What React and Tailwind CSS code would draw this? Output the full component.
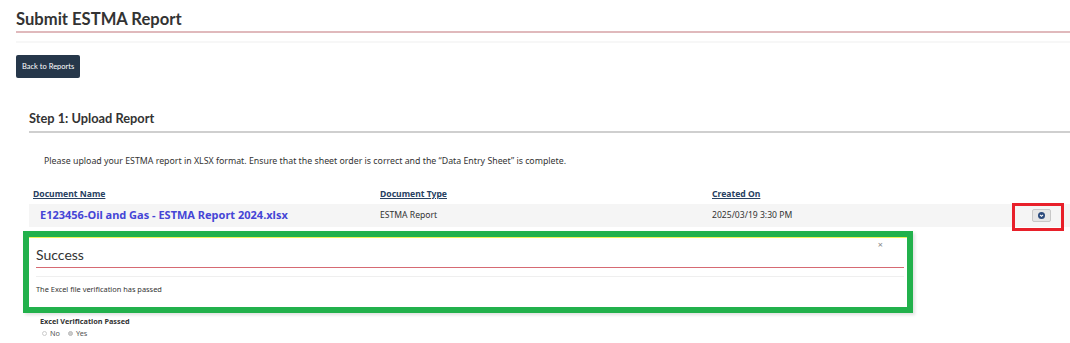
export default function App() {
  return (
    <div className="min-h-screen bg-white pl-[16px] text-[#333]" style={{ fontFamily: '"Noto Sans", sans-serif' }}>
      <h1 className="pt-[7px] text-[16.6px] font-bold leading-[24px] border-b-2 border-[#e0b9bc]" style={{ fontFamily: 'Lato, sans-serif' }}>
        Submit ESTMA Report
      </h1>
      <div className="mt-[8px] h-[2px] bg-[#f7f7f7]" />

      <button className="mt-[12px] h-[23px] rounded-[2px] bg-[#26374a] px-[6px] text-[7.5px] text-white" style={{ fontFamily: 'Lato, sans-serif' }}>
        Back to Reports
      </button>

      <div className="pl-[13px]">
        <h2 className="mt-[30px] pb-[3px] text-[12.8px] font-bold leading-[20px] border-b-2 border-[#cfcfcf]" style={{ fontFamily: 'Lato, sans-serif' }}>
          Step 1: Upload Report
        </h2>

        <p className="mt-[21px] pl-[15px] text-[8.8px] leading-[14px] text-[#333]">
          Please upload your ESTMA report in XLSX format. Ensure that the sheet order is correct and the “Data Entry Sheet” is complete.
        </p>

        <div className="mt-[19px]">
          <div className="grid grid-cols-[347px_332px_306px_1fr] pb-[3px] text-[8.6px] font-bold leading-[14px] text-[#284162]">
            <span className="pl-[4px] underline">Document Name</span>
            <span className="pl-[4px] underline">Document Type</span>
            <span className="pl-[4px] underline">Created On</span>
            <span />
          </div>
          <div className="grid h-[23px] grid-cols-[347px_332px_306px_1fr] items-center bg-[#f5f5f5] text-[8.6px]">
            <span className="pl-[11px] text-[11px] font-bold text-[#4545d6]">E123456-Oil and Gas - ESTMA Report 2024.xlsx</span>
            <span className="pl-[4px]">ESTMA Report</span>
            <span className="pl-[4px]">2025/03/19 3:30 PM</span>
            <span className="relative flex h-full items-center pl-[18px]">
              <span className="flex h-[13px] w-[19px] items-center justify-center rounded-[2px] border border-[#c8c8c8] bg-[#e6e6e6]">
                <svg width="7" height="7" viewBox="0 0 10 10">
                  <circle cx="5" cy="5" r="5" fill="#2b4a7c" />
                  <path d="M2.8 4 L5 6.2 L7.2 4" fill="none" stroke="#fff" strokeWidth="1.5" />
                </svg>
              </span>
              <span className="absolute left-[-2px] top-[-1px] h-[28px] w-[52px] border-[3px] border-[#e8202a]" />
            </span>
          </div>
        </div>
      </div>

      <div className="ml-[7px] mt-[4px] w-[890px] border-[6px] border-[#22b14c] shadow-[2px_2px_3px_rgba(0,0,0,0.12)]">
        <div className="border-t border-[#eef25a] bg-white pl-[7px] pr-[3px]">
          <div className="relative pt-[8px] pb-[3px] border-b border-[#d66a73]">
            <span className="block text-[14px] leading-[18px] text-[#333]" style={{ fontFamily: 'Lato, sans-serif' }}>Success</span>
            <span className="absolute right-[21px] top-[2px] text-[9px] leading-[9px] text-[#888]">×</span>
          </div>
          <div className="mt-[8px] h-px bg-[#efefef]" />
          <p className="pt-[6px] pb-[12px] text-[7.4px] leading-[12px] text-[#333]">The Excel file verification has passed</p>
        </div>
      </div>

      <div className="mt-[2px] pl-[24px]">
        <p className="text-[7.3px] font-bold leading-[12px] text-[#333]">Excel Verification Passed</p>
        <div className="mt-[1px] flex items-center gap-[3px] pl-[2px] text-[7.3px] leading-[10px] text-[#555]">
          <span className="h-[5px] w-[5px] rounded-full border border-[#ccc] bg-white" />
          <span>No</span>
          <span className="ml-[5px] h-[5px] w-[5px] rounded-full border border-[#bbb] bg-[#ccc]" />
          <span>Yes</span>
        </div>
      </div>
    </div>
  )
}
